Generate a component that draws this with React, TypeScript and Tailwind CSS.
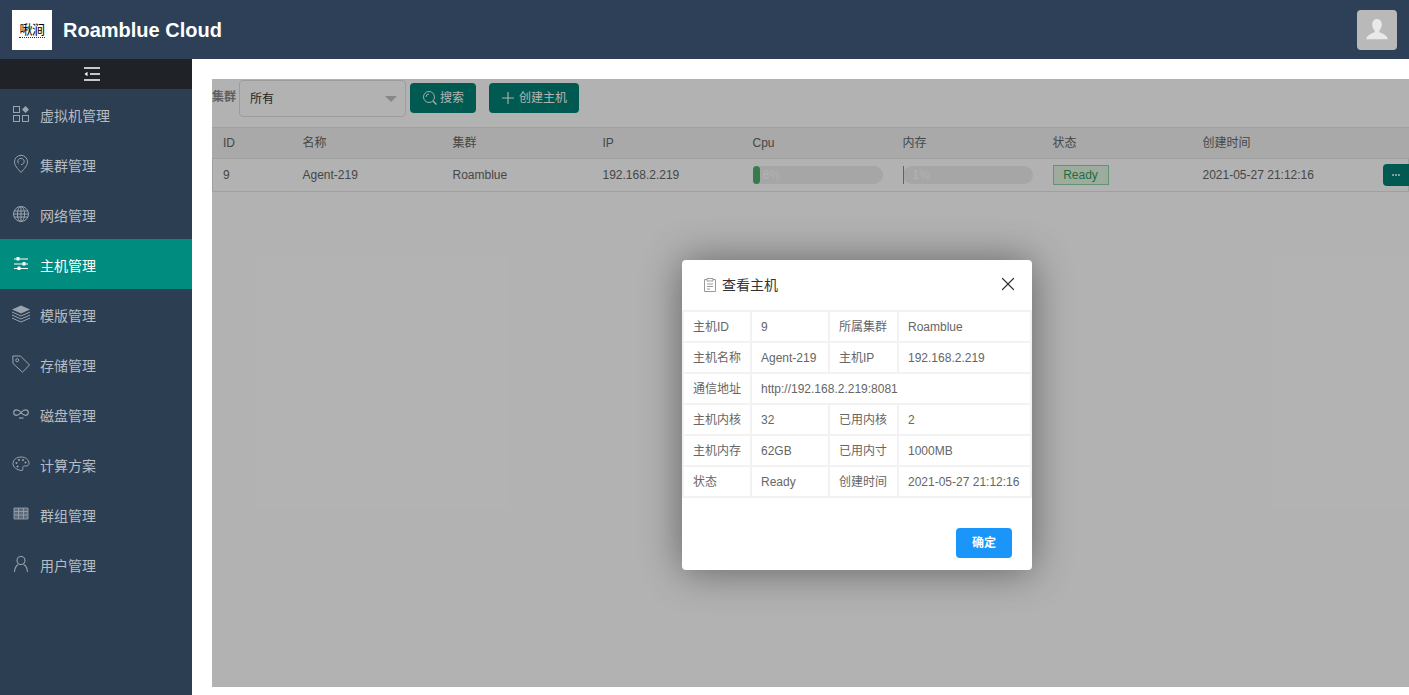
import { Ellipsis, X } from "lucide-react";

const font = "font-['Liberation_Sans','Noto_Sans_CJK_SC',sans-serif]";

function IconApps() {
  return (
    <svg width="18" height="18" viewBox="0 0 18 18" fill="none" stroke="currentColor" strokeWidth="1">
      <rect x="1.500" y="1.500" width="6" height="6" />
      <rect x="1.500" y="10.500" width="6" height="6" />
      <rect x="10.500" y="10.500" width="6" height="6" />
      <path d="M13.500 1l3.500 3.500-3.500 3.500L10 4.500z" fill="currentColor" stroke="none" />
    </svg>
  );
}

function IconPin() {
  return (
    <svg width="18" height="20" viewBox="0 0 18 20" fill="none" stroke="currentColor" strokeWidth="1">
      <path d="M9 18.500C5.500 14.500 2.500 11.500 2.500 7.800a6.500 6.500 0 0 1 13 0c0 3.700-3 6.700-6.500 10.700z" />
      <path d="M6.500 9.500A3.200 3.200 0 1 1 9 10.700" />
    </svg>
  );
}

function IconGlobe() {
  return (
    <svg width="18" height="18" viewBox="0 0 18 18" fill="none" stroke="currentColor" strokeWidth="1">
      <circle cx="9" cy="9" r="7.500" />
      <ellipse cx="9" cy="9" rx="3.600" ry="7.500" />
      <path d="M9 1.500v15M2 6h14M2 12h14M1.500 9h15" />
    </svg>
  );
}

function IconSliders() {
  return (
    <svg width="18" height="18" viewBox="0 0 18 18" fill="currentColor">
      <rect x="2" y="3.500" width="14" height="1" />
      <rect x="2" y="8.500" width="14" height="1" />
      <rect x="2" y="13" width="14" height="1" />
      <rect x="4.500" y="2" width="3" height="3.500" rx=".5" />
      <rect x="10.500" y="7" width="3" height="3.500" rx=".5" />
      <rect x="5.500" y="11.500" width="3" height="3.500" rx=".5" />
    </svg>
  );
}

function IconLayers() {
  return (
    <svg width="18" height="18" viewBox="0 0 18 18" fill="none" stroke="currentColor" strokeWidth="1">
      <path d="M9 .5l9 4-9 4-9-4z" fill="currentColor" stroke="none" />
      <path d="M0 7l9 4 9-4M0 10l9 4 9-4M0 13l9 4 9-4" />
    </svg>
  );
}

function IconTag() {
  return (
    <svg width="18" height="18" viewBox="0 0 18 18" fill="none" stroke="currentColor" strokeWidth="1">
      <path d="M.8 1h7.700l9 9-7 7.200L1 8.500z" />
      <circle cx="5.200" cy="5.200" r="1.500" />
    </svg>
  );
}

function IconInfinity() {
  return (
    <svg width="18" height="18" viewBox="0 0 18 18" fill="none" stroke="currentColor" strokeWidth="1.200">
      <path d="M9 7.500C7.500 5.500 6.300 4.800 4.500 4.800a2.800 2.800 0 0 0 0 5.600c1.800 0 3-1 4.500-2.900s2.700-2.700 4.500-2.700a2.800 2.800 0 0 1 0 5.600c-1.800 0-3-1-4.500-2.900" />
      <path d="M7 13h4.500" />
    </svg>
  );
}

function IconPalette() {
  return (
    <svg width="18" height="18" viewBox="0 0 18 18" fill="none" stroke="currentColor" strokeWidth="1">
      <path d="M9 2c4.500 0 8 2.800 8 6.200 0 2-1.500 3-3.500 2.800-1.700-.2-2.800.4-2.800 1.700 0 1 .6 1.400.3 2-.3.700-1.200.8-2.200.8C4.700 14.500 1 12.500 1 8.500 1 4.800 4.500 2 9 2z" />
      <circle cx="4.500" cy="8" r="1" fill="currentColor" stroke="none" />
      <circle cx="7" cy="5" r="1" fill="currentColor" stroke="none" />
      <circle cx="11" cy="5" r="1" fill="currentColor" stroke="none" />
      <circle cx="13.500" cy="7.500" r="1" fill="currentColor" stroke="none" />
      <circle cx="5.500" cy="11.500" r="1" fill="currentColor" stroke="none" />
    </svg>
  );
}

function IconTable() {
  return (
    <svg width="18" height="18" viewBox="0 0 18 18" fill="none">
      <rect x="2" y="3" width="14" height="11" fill="currentColor" opacity=".45" />
      <path d="M2 3h14v11H2zM2 6.500h14M2 10h14M6.500 3v11M11.500 3v11" stroke="currentColor" strokeWidth=".8" />
    </svg>
  );
}

function IconUser() {
  return (
    <svg width="18" height="18" viewBox="0 0 18 18" fill="none" stroke="currentColor" strokeWidth="1.100">
      <circle cx="9" cy="5.500" r="4" />
      <path d="M2.500 17c.2-4 1.800-6.500 3.800-7.600M15.500 17c-.2-4-1.800-6.500-3.800-7.600" />
    </svg>
  );
}

const menu = [
  { label: "虚拟机管理", icon: IconApps },
  { label: "集群管理", icon: IconPin },
  { label: "网络管理", icon: IconGlobe },
  { label: "主机管理", icon: IconSliders, active: true },
  { label: "模版管理", icon: IconLayers },
  { label: "存储管理", icon: IconTag },
  { label: "磁盘管理", icon: IconInfinity },
  { label: "计算方案", icon: IconPalette },
  { label: "群组管理", icon: IconTable },
  { label: "用户管理", icon: IconUser },
];

const columns = ["ID", "名称", "集群", "IP", "Cpu", "内存", "状态", "创建时间"];
const rowGrid = "grid grid-cols-[79.5px_150px_150px_150px_150px_150px_150px_1fr]";

const details = [
  ["主机ID", "9", "所属集群", "Roamblue"],
  ["主机名称", "Agent-219", "主机IP", "192.168.2.219"],
  ["通信地址", "http://192.168.2.219:8081"],
  ["主机内核", "32", "已用内核", "2"],
  ["主机内存", "62GB", "已用内寸", "1000MB"],
  ["状态", "Ready", "创建时间", "2021-05-27 21:12:16"],
];

function Progress({ value, fill }: { value: string; fill: string }) {
  return (
    <div className="relative h-[18px] w-[130px] rounded-full bg-[#eeeeee]">
      <div className={`h-full bg-[#4fb06e] ${fill}`} />
      <span className="absolute top-0 left-[10px] text-xs leading-[18px] text-white">{value}</span>
    </div>
  );
}

export default function App() {
  return (
    <div className={`flex h-[695px] flex-col overflow-hidden bg-white ${font}`}>
      <header className="flex h-[59px] shrink-0 items-center justify-between bg-[#2d4057] pr-3 pl-3">
        <div className="flex items-center gap-[11px]">
          <div className="flex h-10 w-10 flex-col items-center justify-center bg-white pt-px text-black">
            <span className="text-[13px] leading-[14px] tracking-[-0.5px] whitespace-nowrap">啾涧</span>
            <span className="h-0 w-[26px] border-t border-dotted border-[#333333]" />
          </div>
          <span className="text-xl font-bold text-white">Roamblue Cloud</span>
        </div>
        <div className="flex h-10 w-10 items-end justify-center rounded-sm bg-[#b9b9b9]">
          <svg width="24" height="24" viewBox="0 0 26 26" fill="#e9e9e9" className="mb-2">
            <path d="M13 1c3.200 0 5.200 2.500 5.200 6 0 2.800-1.100 5-2.600 6.300v2c1 1 7.400 2.600 8.900 6.700v1H1.500v-1c1.500-4.100 7.900-5.700 8.900-6.700v-2C8.900 12 7.800 9.800 7.800 7c0-3.500 2-6 5.200-6z" />
          </svg>
        </div>
      </header>

      <div className="flex min-h-0 flex-1">
        <aside className="w-[192px] shrink-0 bg-[#2c3e52]">
          <div className="flex h-[30px] items-center justify-center bg-[#1f2227]">
            <svg width="18" height="14" viewBox="0 0 18 14" fill="none" stroke="#ffffff" strokeWidth="1.400" className="-translate-x-1">
              <path d="M1 1h16M7 7h10M1 13h16" />
              <path d="M1.500 7L4.500 4.800v4.400z" fill="#ffffff" stroke="none" />
            </svg>
          </div>
          {menu.map((item) => {
            const Icon = item.icon;
            return (
              <div
                key={item.label}
                className={`flex h-[50px] items-center pt-1 pl-3 text-sm ${
                  item.active ? "bg-[#008c7e] text-white" : "text-[#b7bdc5]"
                }`}
              >
                <span className={`flex w-[28px] -translate-y-[2px] justify-start ${item.active ? "" : "opacity-80"}`}>
                  <Icon />
                </span>
                {item.label}
              </div>
            );
          })}
        </aside>

        <main className="flex min-w-0 flex-1 pt-5 pb-2 pl-5">
          <div className="relative min-w-0 flex-1 overflow-hidden bg-white text-xs text-[#666666]">
            <div className="flex h-[48px] items-start">
              <span className="mt-[10px] w-[27px] font-bold text-[#888888]">集群</span>
              <div className="mt-px flex h-[37px] w-[167px] items-center justify-between rounded-sm border border-[#e0e0e0] pr-2 pl-[10px] text-[#333333]">
                所有
                <span className="h-0 w-0 border-x-[6px] border-t-[6px] border-x-transparent border-t-[#c2c2c2]" />
              </div>
              <button className="mt-1 ml-1 flex h-[30px] w-[66px] items-center justify-center gap-0.5 rounded-sm bg-[#008274] text-white">
                <svg width="16" height="16" viewBox="0 0 16 16" fill="none" stroke="currentColor" strokeWidth=".9">
                  <circle cx="7" cy="7" r="5.500" />
                  <path d="M11 11l3.500 3.500" strokeWidth="1.300" />
                  <path d="M4 7a3 3 0 0 1 3-3" />
                </svg>
                搜索
              </button>
              <button className="mt-1 ml-[13px] flex h-[30px] w-[90px] items-center justify-center gap-1 rounded-sm bg-[#008274] text-white">
                <svg width="14" height="14" viewBox="0 0 14 14" fill="none" stroke="currentColor" strokeWidth="1.100">
                  <path d="M7 1v12M1 7h12" />
                </svg>
                创建主机
              </button>
            </div>

            <div className={`${rowGrid} h-[32px] items-center border-y border-[#e6e6e6] bg-[#f2f2f2] pl-[11px]`}>
              {columns.map((c) => (
                <span key={c}>{c}</span>
              ))}
            </div>
            <div className={`${rowGrid} relative h-[33px] items-center border-x border-b border-[#e6e6e6] pl-[10px]`}>
              <span>9</span>
              <span>Agent-219</span>
              <span>Roamblue</span>
              <span>192.168.2.219</span>
              <Progress value="6%" fill="w-[7px] rounded-full" />
              <Progress value="1%" fill="w-px" />
              <span className="flex h-[20px] w-[56px] items-center justify-center border border-[#8fd4a3] bg-[#e3f7e6] text-[#2f9e57]">
                Ready
              </span>
              <span>2021-05-27 21:12:16</span>
              <button className="absolute top-[5px] -right-px flex h-[22px] w-[26px] items-center justify-center rounded-l-sm bg-[#008274] text-white">
                <Ellipsis size={10} strokeWidth={3} />
              </button>
            </div>

            <div className="absolute inset-0 bg-black/30" />
            <div className="absolute top-[181px] left-[470px] h-[310px] w-[350px] rounded-sm bg-white shadow-[0_1px_40px_rgba(0,0,0,0.45)]">
              <div className="flex h-[50px] items-center justify-between pr-[13px] pl-[20px]">
                <div className="flex items-center gap-1 text-sm text-[#333333]">
                  <svg width="16" height="16" viewBox="0 0 16 16" fill="none" stroke="#999999" strokeWidth="1">
                    <path d="M5 2.500H2.500v12h11v-12H11M5 1.500h6v2.500H5zM5 7h6M5 9.500h6M5 12h3" />
                  </svg>
                  查看主机
                </div>
                <X size={22} strokeWidth={1.300} className="-translate-y-px text-[#333333]" />
              </div>
              <table className="w-full table-fixed border-collapse text-xs text-[#666666]">
                <colgroup>
                  <col className="w-[68px]" />
                  <col className="w-[78px]" />
                  <col className="w-[69px]" />
                  <col />
                </colgroup>
                <tbody>
                  {details.map((row) => (
                    <tr key={row[0]} className="h-[31px]">
                      <td className="border-2 border-[#f2f2f2] pl-[9px] whitespace-nowrap">{row[0]}</td>
                      {row.length === 2 ? (
                        <td colSpan={3} className="border-2 border-[#f2f2f2] pl-[9px]">
                          {row[1]}
                        </td>
                      ) : (
                        <>
                          <td className="border-2 border-[#f2f2f2] pl-[9px]">{row[1]}</td>
                          <td className="border-2 border-[#f2f2f2] pl-[9px] whitespace-nowrap">{row[2]}</td>
                          <td className="border-2 border-[#f2f2f2] pl-[9px] whitespace-nowrap">{row[3]}</td>
                        </>
                      )}
                    </tr>
                  ))}
                </tbody>
              </table>
              <div className="flex justify-end pt-[30px] pr-[20px]">
                <button className="h-[30px] w-[56px] rounded-sm bg-[#1a96fb] text-xs font-bold text-white">确定</button>
              </div>
            </div>
          </div>
        </main>
      </div>
    </div>
  );
}
